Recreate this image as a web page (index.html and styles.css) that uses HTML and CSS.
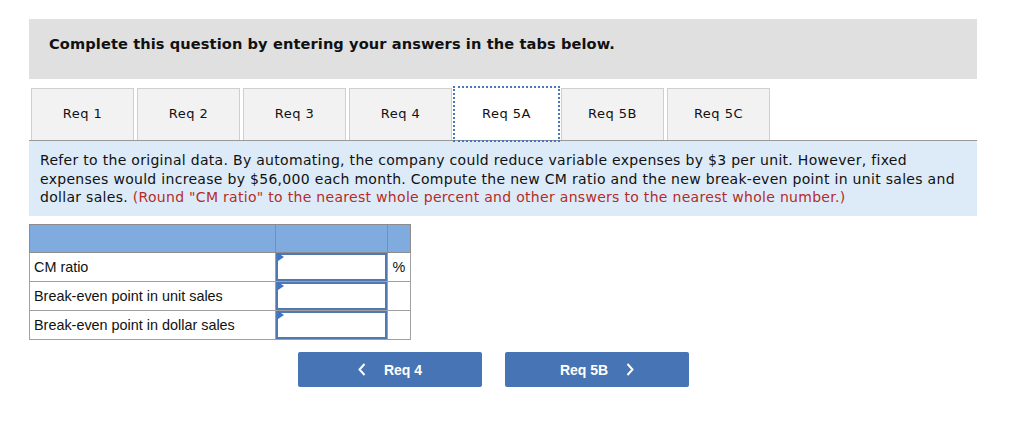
FILE: index.html
```html
<!DOCTYPE html>
<html>
<head>
<meta charset="utf-8">
<link rel="stylesheet" href="styles.css">
</head>
<body>
<div class="wrap">
  <div class="header">Complete this question by entering your answers in the tabs below.</div>
  <div class="tabs">
    <div class="tab">Req 1</div>
    <div class="tab">Req 2</div>
    <div class="tab">Req 3</div>
    <div class="tab">Req 4</div>
    <div class="tab active">Req 5A</div>
    <div class="tab">Req 5B</div>
    <div class="tab">Req 5C</div>
  </div>
  <div class="info">Refer to the original data. By automating, the company could reduce variable expenses by $3 per unit. However, fixed expenses would increase by $56,000 each month. Compute the new CM ratio and the new break-even point in unit sales and dollar sales. <span class="red">(Round "CM ratio" to the nearest whole percent and other answers to the nearest whole number.)</span></div>
  <table class="grid">
    <tr class="head"><td class="c1"></td><td class="c2"></td><td class="c3"></td></tr>
    <tr><td class="c1">CM ratio</td><td class="c2"><div class="inp"></div></td><td class="c3">%</td></tr>
    <tr><td class="c1">Break-even point in unit sales</td><td class="c2"><div class="inp"></div></td><td class="c3"></td></tr>
    <tr><td class="c1">Break-even point in dollar sales</td><td class="c2"><div class="inp"></div></td><td class="c3"></td></tr>
  </table>
  <div class="nav">
    <div class="btn"><svg class="chev" width="8" height="13" viewBox="0 0 8 13"><path d="M6.5 1 L1.5 6.5 L6.5 12" fill="none" stroke="#fff" stroke-width="2"/></svg><span>Req 4</span></div>
    <div class="btn"><span>Req 5B</span><svg class="chev" width="8" height="13" viewBox="0 0 8 13"><path d="M1.5 1 L6.5 6.5 L1.5 12" fill="none" stroke="#fff" stroke-width="2"/></svg></div>
  </div>
</div>
</body>
</html>
```
FILE: styles.css
```css
body {
  margin: 0;
  background: #fff;
  font-family: "DejaVu Sans", Verdana, sans-serif;
  color: #111;
}
.wrap {
  padding: 19px 0 0 29px;
  width: 948px;
}
.header {
  background: #e0e0e0;
  height: 60px;
  box-sizing: border-box;
  padding: 16px 0 0 20px;
  font-weight: bold;
  font-size: 14.6px;
  line-height: 18px;
  letter-spacing: 0.1px;
}
.tabs {
  margin-top: 9px;
  display: flex;
  gap: 3px;
  padding-left: 2px;
  border-bottom: 1px solid #999;
  height: 52px;
}
.tab {
  width: 103px;
  box-sizing: border-box;
  border: 1px solid #cfcfcf;
  border-bottom: none;
  background: #f2f2f2;
  display: flex;
  align-items: center;
  justify-content: center;
  font-size: 13px;
  letter-spacing: 0.5px;
  padding-bottom: 2px;
}
.tab.active {
  background: #fff;
  outline: 2px dotted #4a76b8;
  outline-offset: 0;
  border-color: #fff;
}
.info {
  background: #ddebf8;
  height: 75px;
  box-sizing: border-box;
  padding: 10px 11px 0 11px;
  font-size: 14px;
  line-height: 18.5px;
  letter-spacing: 0.3px;
}
.red { color: #b52b27; }
.grid {
  margin-top: 8px;
  border-collapse: collapse;
  font-family: "Liberation Sans", Arial, sans-serif;
  font-size: 14.4px;
}
.grid td {
  border: 1px solid #a0a0a0;
  height: 28px;
  padding: 0;
  box-sizing: border-box;
}
.grid tr.head td {
  background: #7fabdf;
  border-color: #8c8c8c;
}
.grid .c1 { width: 246px; padding-left: 4px; }
.grid .c2 { width: 112px; }
.grid .c3 { width: 23px; text-align: center; }
.inp {
  position: relative;
  height: 28px;
  box-sizing: border-box;
  border: 2px solid #5179b1;
  background: #fff;
}
.inp::before {
  content: "";
  position: absolute;
  left: 0;
  top: -2px;
  border-left: 6px solid #3d74c4;
  border-top: 4px solid transparent;
  border-bottom: 4px solid transparent;
}
.nav {
  margin-top: 12px;
  padding-left: 269px;
  display: flex;
  gap: 23px;
}
.btn {
  width: 184px;
  height: 35px;
  background: #4774b4;
  border-radius: 2px;
  color: #fff;
  font-family: "Liberation Sans", Arial, sans-serif;
  font-weight: bold;
  font-size: 14px;
  display: flex;
  align-items: center;
  justify-content: center;
  gap: 18px;
}
.chev { display: block; }
```
